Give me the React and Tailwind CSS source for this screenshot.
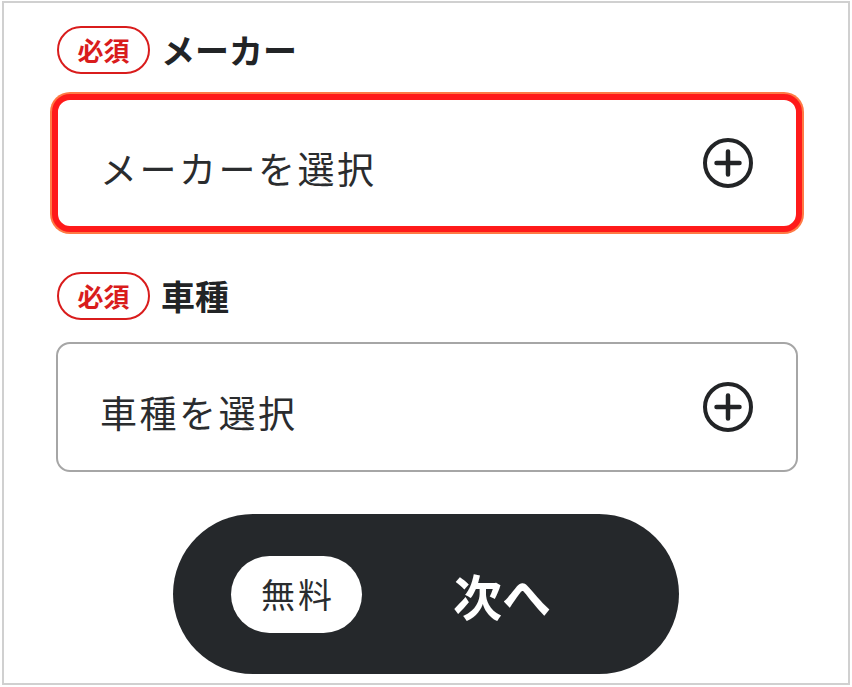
import React from "react";

const font = { fontFamily: '"Noto Sans CJK JP", "Noto Sans", sans-serif' };

function PlusCircle() {
  return (
    <svg width="52" height="52" viewBox="0 0 52 52" fill="none">
      <circle cx="26" cy="26" r="23" stroke="#222426" strokeWidth="4" />
      <path d="M26 14.5V37.5M14.5 26H37.5" stroke="#222426" strokeWidth="4.5" strokeLinecap="round" />
    </svg>
  );
}

function Badge() {
  return (
    <span className="flex h-[48px] w-[93px] items-center justify-center rounded-full border-2 border-[#d91c1c] text-[26px] font-bold leading-none text-[#d91c1c]">
      必須
    </span>
  );
}

export default function App() {
  return (
    <div className="bg-white w-[852px] h-[687px]" style={font}>
      <div className="ml-[2px] mt-[1px] w-[848px] h-[684px] border-2 border-[#d0d0d0] bg-white flex flex-col pl-[52px] pr-[50px] pt-[23px]">
        <div className="flex items-center gap-[11px] pl-[1px]">
          <Badge />
          <span className="text-[34px] font-bold leading-none text-[#222426]">メーカー</span>
        </div>
        <div className="mt-[24px] flex h-[130px] items-center justify-between rounded-[14px] border-2 border-[#ff1a1a] bg-white pl-[42px] pr-[42px] shadow-[0_0_0_4px_#ff1a1a,0_0_0_6px_#ff7a45]">
          <span className="mt-[10px] text-[37px] leading-none tracking-[2.5px] text-[#2a2c2e]">メーカーを選択</span>
          <PlusCircle />
        </div>
        <div className="mt-[44px] flex items-center gap-[11px] pl-[1px]">
          <Badge />
          <span className="text-[34px] font-bold leading-none text-[#222426]">車種</span>
        </div>
        <div className="mt-[22px] flex h-[130px] items-center justify-between rounded-[14px] border-2 border-[#a6a6a6] bg-white pl-[42px] pr-[42px]">
          <span className="mt-[10px] text-[37px] leading-none tracking-[2.5px] text-[#2a2c2e]">車種を選択</span>
          <PlusCircle />
        </div>
        <div className="mt-[42px] flex justify-center pr-[2px]">
          <button className="flex h-[160px] w-[506px] items-center rounded-full bg-[#25282b] pl-[58px]">
            <span className="flex h-[77px] w-[131px] items-center justify-center rounded-full bg-white pl-[3px] text-[34px] leading-none tracking-[3px] text-[#2a2c2e]">
              無料
            </span>
            <span className="ml-[91px] text-[49px] font-bold leading-none text-white">次へ</span>
          </button>
        </div>
      </div>
    </div>
  );
}
